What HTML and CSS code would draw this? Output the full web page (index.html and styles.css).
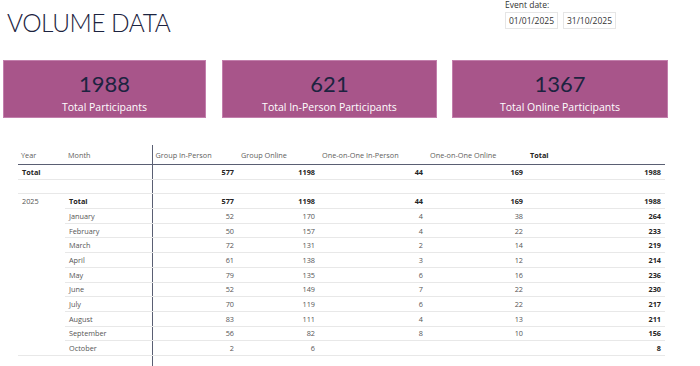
FILE: index.html
```
<!DOCTYPE html>
<html lang="en">
<head>
    <meta charset="UTF-8">
    <title>Volume Data</title>
    <link rel="stylesheet" href="styles.css">
</head>
<body>
    <div class="page">
        <div class="top">
            <h1 class="title">VOLUME DATA</h1>
            <div class="dates">
                <div class="dates-label">Event date:</div>
                <div class="date-boxes">
                    <div class="date-box">01/01/2025</div>
                    <div class="date-box">31/10/2025</div>
                </div>
            </div>
        </div>

        <div class="cards">
            <div class="card card-1">
                <div class="card-value">1988</div>
                <div class="card-label">Total Participants</div>
            </div>
            <div class="card card-2">
                <div class="card-value">621</div>
                <div class="card-label">Total In-Person Participants</div>
            </div>
            <div class="card card-3">
                <div class="card-value">1367</div>
                <div class="card-label">Total Online Participants</div>
            </div>
        </div>

        <table class="matrix">
            <colgroup>
                <col style="width:47px">
                <col style="width:87px">
                <col style="width:86px">
                <col style="width:81px">
                <col style="width:108px">
                <col style="width:100px">
                <col style="width:138px">
            </colgroup>
            <thead>
                <tr>
                    <th>Year</th>
                    <th class="split">Month</th>
                    <th>Group In-Person</th>
                    <th>Group Online</th>
                    <th>One-on-One In-Person</th>
                    <th>One-on-One Online</th>
                    <th class="bold">Total</th>
                </tr>
            </thead>
            <tbody>
                <tr class="grand">
                    <td class="bold">Total</td>
                    <td class="split"></td>
                    <td class="num bold">577</td>
                    <td class="num bold">1198</td>
                    <td class="num bold">44</td>
                    <td class="num bold">169</td>
                    <td class="num bold">1988</td>
                </tr>
                <tr class="grand">
                    <td></td><td class="split"></td><td></td><td></td><td></td><td></td><td></td>
                </tr>
                <tr class="sub">
                    <td class="year">2025</td>
                    <td class="split bold">Total</td>
                    <td class="num bold">577</td>
                    <td class="num bold">1198</td>
                    <td class="num bold">44</td>
                    <td class="num bold">169</td>
                    <td class="num bold">1988</td>
                </tr>
                <tr class="sub"><td class="year"></td><td class="split">January</td><td class="num">52</td><td class="num">170</td><td class="num">4</td><td class="num">38</td><td class="num bold">264</td></tr>
                <tr class="sub"><td class="year"></td><td class="split">February</td><td class="num">50</td><td class="num">157</td><td class="num">4</td><td class="num">22</td><td class="num bold">233</td></tr>
                <tr class="sub"><td class="year"></td><td class="split">March</td><td class="num">72</td><td class="num">131</td><td class="num">2</td><td class="num">14</td><td class="num bold">219</td></tr>
                <tr class="sub"><td class="year"></td><td class="split">April</td><td class="num">61</td><td class="num">138</td><td class="num">3</td><td class="num">12</td><td class="num bold">214</td></tr>
                <tr class="sub"><td class="year"></td><td class="split">May</td><td class="num">79</td><td class="num">135</td><td class="num">6</td><td class="num">16</td><td class="num bold">236</td></tr>
                <tr class="sub"><td class="year"></td><td class="split">June</td><td class="num">52</td><td class="num">149</td><td class="num">7</td><td class="num">22</td><td class="num bold">230</td></tr>
                <tr class="sub"><td class="year"></td><td class="split">July</td><td class="num">70</td><td class="num">119</td><td class="num">6</td><td class="num">22</td><td class="num bold">217</td></tr>
                <tr class="sub"><td class="year"></td><td class="split">August</td><td class="num">83</td><td class="num">111</td><td class="num">4</td><td class="num">13</td><td class="num bold">211</td></tr>
                <tr class="sub"><td class="year"></td><td class="split">September</td><td class="num">56</td><td class="num">82</td><td class="num">8</td><td class="num">10</td><td class="num bold">156</td></tr>
                <tr class="sub last"><td class="year"></td><td class="split">October</td><td class="num">2</td><td class="num">6</td><td class="num"></td><td class="num"></td><td class="num bold">8</td></tr>
                <tr class="filler"><td></td><td class="split"></td><td></td><td></td><td></td><td></td><td></td></tr>
            </tbody>
        </table>
    </div>
</body>
</html>
```

FILE: styles.css
```
body {
    margin: 0;
    background: #ffffff;
    font-family: 'Open Sans', 'Noto Sans', sans-serif;
    color: #252423;
    overflow: hidden;
}
.page {
    width: 700px;
    height: 366px;
    overflow: hidden;
}
.top {
    display: flex;
    height: 60px;
}
.title {
    margin: 0;
    padding: 8px 0 0 7px;
    width: 498px;
    font-family: 'Lato', sans-serif;
    font-weight: 300;
    font-size: 24.5px;
    letter-spacing: -0.5px;
    color: #1c2340;
}
.dates {
    margin-top: 0;
}
.dates-label {
    font-size: 8.5px;
    color: #333;
    height: 12px;
    line-height: 9px;
}
.date-boxes {
    display: flex;
    gap: 5px;
}
.date-box {
    width: 51px;
    height: 15px;
    border: 1px solid #e6e6e6;
    font-size: 8.5px;
    line-height: 15px;
    text-align: center;
    color: #333;
}
.cards {
    display: flex;
    padding-left: 3px;
    height: 85px;
}
.card {
    box-sizing: border-box;
    height: 58px;
    background-color: #a8558a;
    border: 1px solid #c27fac;
    text-align: center;
}
.card-1 {
    width: 203px;
    margin-right: 16px;
}
.card-2 {
    width: 215px;
    margin-right: 15px;
}
.card-3 {
    width: 216px;
}
.card-value {
    font-family: 'Lato', sans-serif;
    font-size: 22px;
    color: #1c2340;
    margin-top: 10px;
    line-height: 26px;
}
.card-label {
    font-family: 'Open Sans', sans-serif;
    font-size: 10.5px;
    color: #ffffff;
    margin-top: 3px;
    line-height: 14px;
}
.matrix {
    margin-left: 18px;
    border-collapse: collapse;
    table-layout: fixed;
    width: 647px;
    font-size: 7.3px;
}
.matrix th {
    height: 19px;
    padding: 0 3px;
    font-weight: normal;
    text-align: left;
    color: #605e5c;
    border-bottom: 1px solid #5a5f73;
}
.matrix th.bold {
    font-weight: 700;
    color: #252423;
}
.matrix td {
    height: 13.7px;
    padding: 0 4px;
    color: #555;
    border-bottom: 1px solid #e8e8e8;
}
.matrix td.num {
    text-align: right;
}
.matrix td.bold {
    font-weight: 700;
    color: #252423;
}
.matrix .split {
    border-right: 1px solid #5a5f73;
}
.matrix tr.sub td.year {
    border-bottom: none;
}
.matrix tr.last td.year {
    border-bottom: 1px solid #e8e8e8;
}
.matrix tr.filler td {
    height: 30px;
    border-bottom: none;
}
```
